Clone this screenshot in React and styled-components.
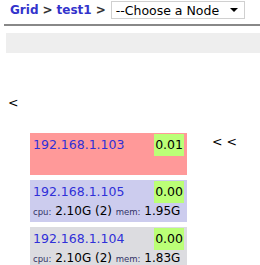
import styled, { createGlobalStyle } from "styled-components";

const Global = createGlobalStyle`
  body {
    margin: 0;
    background: #fff;
    font-family: "DejaVu Sans", Verdana, sans-serif;
    font-size: 12.5px;
    color: #000;
  }
`;

const nodes = [
  { ip: "192.168.1.103", load: "0.01", bg: "#ff9999" },
  { ip: "192.168.1.105", load: "0.00", bg: "#ccccee", cpu: "2.10G (2)", mem: "1.95G" },
  { ip: "192.168.1.104", load: "0.00", bg: "#dcdce0", cpu: "2.10G (2)", mem: "1.83G" },
];

export default function App() {
  return (
    <>
      <Global />
      <Page>
        <Crumbs>
          <Link>Grid</Link>
          <Sep>&gt;</Sep>
          <Link>test1</Link>
          <Sep>&gt;</Sep>
          <Select>
            <span>--Choose a Node</span>
            <Arrow />
          </Select>
        </Crumbs>
        <Rule />
        <Bar />
        <Back>&lt;</Back>
        <Grid>
          <Column>
            {nodes.map((n) => (
              <Card key={n.ip} $bg={n.bg}>
                <Top>
                  <Ip>{n.ip}</Ip>
                  <Load>{n.load}</Load>
                </Top>
                {n.cpu && (
                  <Stats>
                    <Label>cpu:</Label> {n.cpu} <Label>mem:</Label> {n.mem}
                  </Stats>
                )}
              </Card>
            ))}
          </Column>
          <Nav>&lt; &lt;</Nav>
        </Grid>
      </Page>
    </>
  );
}

const Page = styled.div`
  width: 260px;
  height: 265px;
  overflow: hidden;
`;

const Crumbs = styled.div`
  display: flex;
  align-items: center;
  gap: 4px;
  padding: 1px 0 0 10px;
  height: 18px;
  font-size: 12px;
  font-weight: bold;
  white-space: nowrap;
`;

const Link = styled.span`
  color: #3333cc;
`;

const Sep = styled.span`
  color: #333;
`;

const Select = styled.div`
  display: flex;
  align-items: center;
  justify-content: space-between;
  box-sizing: border-box;
  width: 134px;
  height: 18px;
  margin-left: 1px;
  padding: 0 6px 0 4px;
  border: 1px solid #d0d0d0;
  font-size: 12.5px;
  font-weight: normal;
  color: #000;
`;

const Arrow = styled.span`
  width: 0;
  height: 0;
  border-left: 4px solid transparent;
  border-right: 4px solid transparent;
  border-top: 4px solid #000;
`;

const Rule = styled.div`
  margin: 5px 0 0 4px;
  border-top: 2px solid #888;
`;

const Bar = styled.div`
  margin: 7px 0 0 6px;
  height: 20px;
  background: #eee;
`;

const Back = styled.div`
  margin: 42px 0 0 8px;
  line-height: 16px;
`;

const Grid = styled.div`
  display: flex;
  align-items: flex-start;
  margin: 22px 0 0 30px;
`;

const Column = styled.div`
  display: flex;
  flex-direction: column;
  gap: 5px;
  width: 157px;
`;

const Card = styled.div`
  box-sizing: border-box;
  min-height: 42px;
  padding: 1px 3px 2px 3px;
  background: ${(p) => p.$bg};
`;

const Top = styled.div`
  display: flex;
  justify-content: space-between;
  align-items: flex-start;
`;

const Ip = styled.span`
  color: #3030d8;
  line-height: 22px;
`;

const Load = styled.span`
  background: #bbff77;
  padding: 0 1px;
  line-height: 22px;
`;

const Stats = styled.div`
  font-size: 12px;
  line-height: 16px;
  white-space: nowrap;
`;

const Label = styled.span`
  font-size: 8.5px;
  color: #333366;
`;

const Nav = styled.div`
  margin: 2px 0 0 25px;
  line-height: 14px;
`;
